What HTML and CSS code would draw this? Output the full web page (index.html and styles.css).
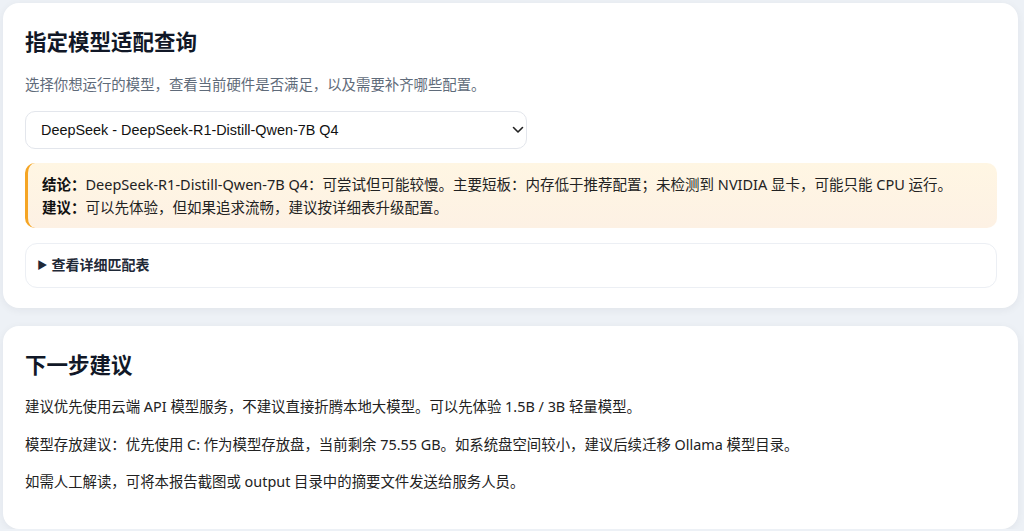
FILE: index.html
```html
<!DOCTYPE html>
<html lang="zh-CN">
<head>
<meta charset="utf-8">
<title>指定模型适配查询</title>
<link rel="stylesheet" href="styles.css">
</head>
<body>
<div class="page">
  <section class="card card-query">
    <h2 class="card-title">指定模型适配查询</h2>
    <p class="subtitle">选择你想运行的模型，查看当前硬件是否满足，以及需要补齐哪些配置。</p>
    <div class="select-wrap">
      <select class="model-select">
        <option>DeepSeek - DeepSeek-R1-Distill-Qwen-7B Q4</option>
      </select>
      <svg class="chevron" width="12" height="8" viewBox="0 0 12 8" aria-hidden="true">
        <path d="M1.5 1.5 L6 6 L10.5 1.5" fill="none" stroke="#222" stroke-width="1.6" stroke-linecap="round" stroke-linejoin="round"/>
      </svg>
    </div>
    <div class="alert">
      <div><b>结论：</b>DeepSeek-R1-Distill-Qwen-7B Q4：可尝试但可能较慢。主要短板：内存低于推荐配置；未检测到 NVIDIA 显卡，可能只能 CPU 运行。</div>
      <div><b>建议：</b>可以先体验，但如果追求流畅，建议按详细表升级配置。</div>
    </div>
    <details class="details">
      <summary class="summary">查看详细匹配表</summary>
    </details>
  </section>
  <section class="card card-next">
    <h2 class="card-title">下一步建议</h2>
    <p class="para para-first">建议优先使用云端 API 模型服务，不建议直接折腾本地大模型。可以先体验 1.5B / 3B 轻量模型。</p>
    <p class="para">模型存放建议：优先使用 C: 作为模型存放盘，当前剩余 75.55 GB。如系统盘空间较小，建议后续迁移 Ollama 模型目录。</p>
    <p class="para">如需人工解读，可将本报告截图或 output 目录中的摘要文件发送给服务人员。</p>
  </section>
</div>
</body>
</html>
```

FILE: styles.css
```css
* { box-sizing: border-box; }
html, body { margin: 0; padding: 0; }
body {
  background: #edf1f6;
  font-family: "Segoe UI", "Noto Sans", "Noto Sans CJK SC", sans-serif;
  color: #1f2937;
  font-size: 14px;
}
.page {
  padding: 3px 6px 0 3px;
  display: flex;
  flex-direction: column;
  gap: 18px;
}
.card {
  background: #ffffff;
  border-radius: 16px;
  box-shadow: 0 2px 8px rgba(30, 41, 59, 0.06);
  padding: 20px 21px 20px 22px;
}
.card-next { padding-bottom: 36px; }
.card-title {
  margin: 0;
  font-size: 21.5px;
  line-height: 36px;
  font-weight: 700;
  color: #111827;
  font-family: "Noto Sans CJK SC", sans-serif;
}
.subtitle {
  margin: 15px 0 0;
  font-size: 14.4px;
  line-height: 22px;
  color: #5f6b7a;
}
.select-wrap {
  position: relative;
  width: 502px;
  margin-top: 15px;
}
.model-select {
  appearance: none;
  -webkit-appearance: none;
  width: 100%;
  height: 38px;
  border: 1px solid #e3e6ec;
  border-radius: 10px;
  background: #fff;
  padding: 0 30px 0 15px;
  font-family: "Liberation Sans", Arial, sans-serif;
  font-size: 14.4px;
  color: #111;
}
.chevron {
  position: absolute;
  right: 3px;
  top: 15px;
}
.alert {
  margin-top: 14px;
  border-left: 3px solid #f5a524;
  border-radius: 10px;
  background: linear-gradient(180deg, #fff6e3 0%, #fdf1e4 100%);
  padding: 10px 14px 9px;
  font-size: 14.5px;
  line-height: 23px;
  color: #222;
}
.alert b { font-weight: 700; color: #111; }
.details {
  margin-top: 15px;
  border: 1px solid #eceff4;
  border-radius: 12px;
  padding: 11px 11px;
}
.summary {
  font-weight: 700;
  font-size: 14px;
  line-height: 20px;
  color: #1f2937;
  cursor: pointer;
  list-style: none;
}
.summary::-webkit-details-marker { display: none; }
.summary::before {
  content: "▶";
  font-size: 10.5px;
  margin-right: 4px;
  position: relative;
  top: -1px;
}
.para {
  margin: 15.5px 0 0;
  font-size: 14.4px;
  line-height: 22px;
  color: #222;
}
.para-first { margin-top: 14px; }
```
